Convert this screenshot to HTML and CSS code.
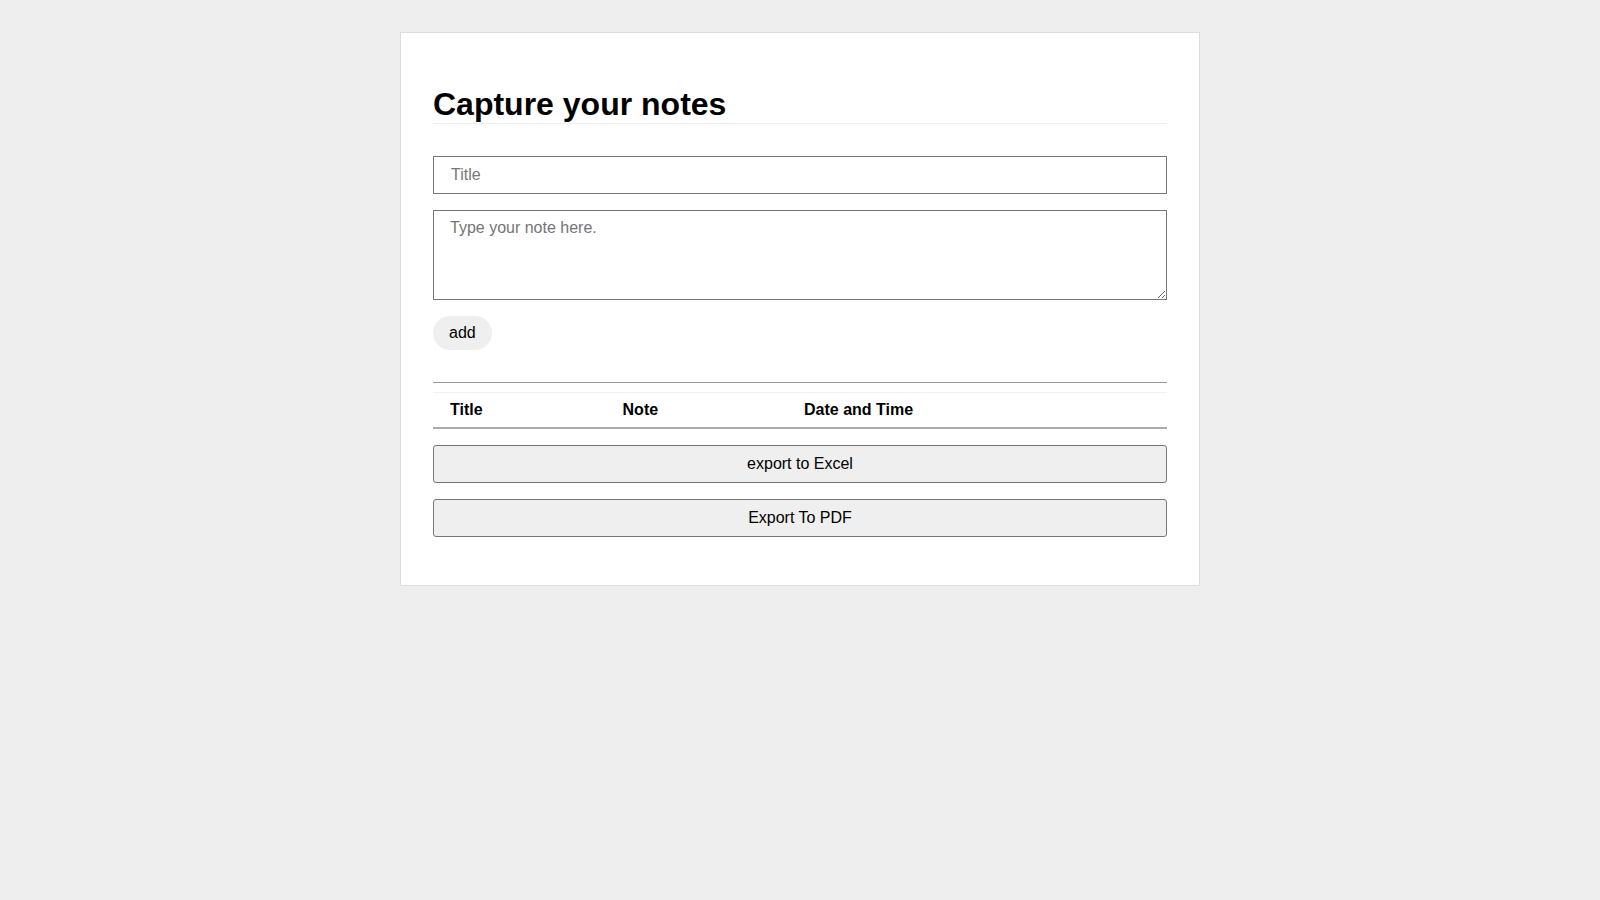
FILE: index.html
```html
<!DOCTYPE html>
<html lang="en">
<head>
<meta charset="utf-8">
<title>Capture your notes</title>
<link rel="stylesheet" href="styles.css">
</head>
<body>
<main class="card">
  <h1 class="heading">Capture your notes</h1>
  <form class="note-form">
    <input class="field title-field" type="text" placeholder="Title">
    <textarea class="field note-field" placeholder="Type your note here."></textarea>
    <button type="button" class="add-btn">add</button>
  </form>
  <hr class="divider">
  <table class="notes-table">
    <thead>
      <tr>
        <th>Title</th>
        <th>Note</th>
        <th>Date and Time</th>
      </tr>
    </thead>
    <tbody></tbody>
  </table>
  <div class="exports">
    <button type="button" class="export-btn">export to Excel</button>
    <button type="button" class="export-btn">Export To PDF</button>
  </div>
</main>
</body>
</html>
```
FILE: styles.css
```css
html, body {
  margin: 0;
  padding: 0;
}
body {
  background: #eeeeee;
  font-family: "Liberation Sans", Arial, sans-serif;
  color: #000;
}
.card {
  box-sizing: border-box;
  width: 800px;
  margin: 32px auto 0;
  background: #fff;
  border: 1px solid #dddddd;
  padding: 32px 32px 48px;
}
.heading {
  font-size: 32px;
  font-weight: bold;
  margin: 21px 0 32px;
  padding-bottom: 0;
  border-bottom: 1px solid #eeeeee;
}
.note-form {
  display: flex;
  flex-direction: column;
  align-items: flex-start;
  gap: 16px;
  margin: 0;
}
.field {
  box-sizing: border-box;
  width: 100%;
  font-family: "Liberation Sans", Arial, sans-serif;
  font-size: 16px;
  border: 1px solid #767676;
  border-radius: 0;
  padding: 8px 16px;
  margin: 0;
  color: #000;
  background: #fff;
}
.field::placeholder {
  color: #757575;
}
.title-field {
  height: 38px;
  padding-left: 17px;
}
.note-field {
  height: 90px;
  resize: vertical;
}
.add-btn {
  box-sizing: border-box;
  height: 34px;
  padding: 0 16px;
  border: none;
  border-radius: 17px;
  background: #efefef;
  font-family: "Liberation Sans", Arial, sans-serif;
  font-size: 16px;
  color: #000;
}
.divider {
  border: 0;
  border-top: 1px solid #999999;
  height: 0;
  margin: 32px 0 0;
}
.notes-table {
  width: 100%;
  border-collapse: collapse;
  margin-top: 9px;
  border-top: 1px solid #f0f0f0;
}
.notes-table th {
  text-align: left;
  font-size: 16px;
  font-weight: bold;
  padding: 8px 16px;
  border-bottom: 2px solid #aaaaaa;
}
.notes-table th:first-child {
  padding-left: 17px;
  padding-right: 15px;
}
.exports {
  display: flex;
  flex-direction: column;
  gap: 16px;
  margin-top: 16px;
}
.export-btn {
  box-sizing: border-box;
  width: 100%;
  height: 38px;
  background: #efefef;
  border: 1px solid #767676;
  border-radius: 3px;
  font-family: "Liberation Sans", Arial, sans-serif;
  font-size: 16px;
  color: #000;
}
```
